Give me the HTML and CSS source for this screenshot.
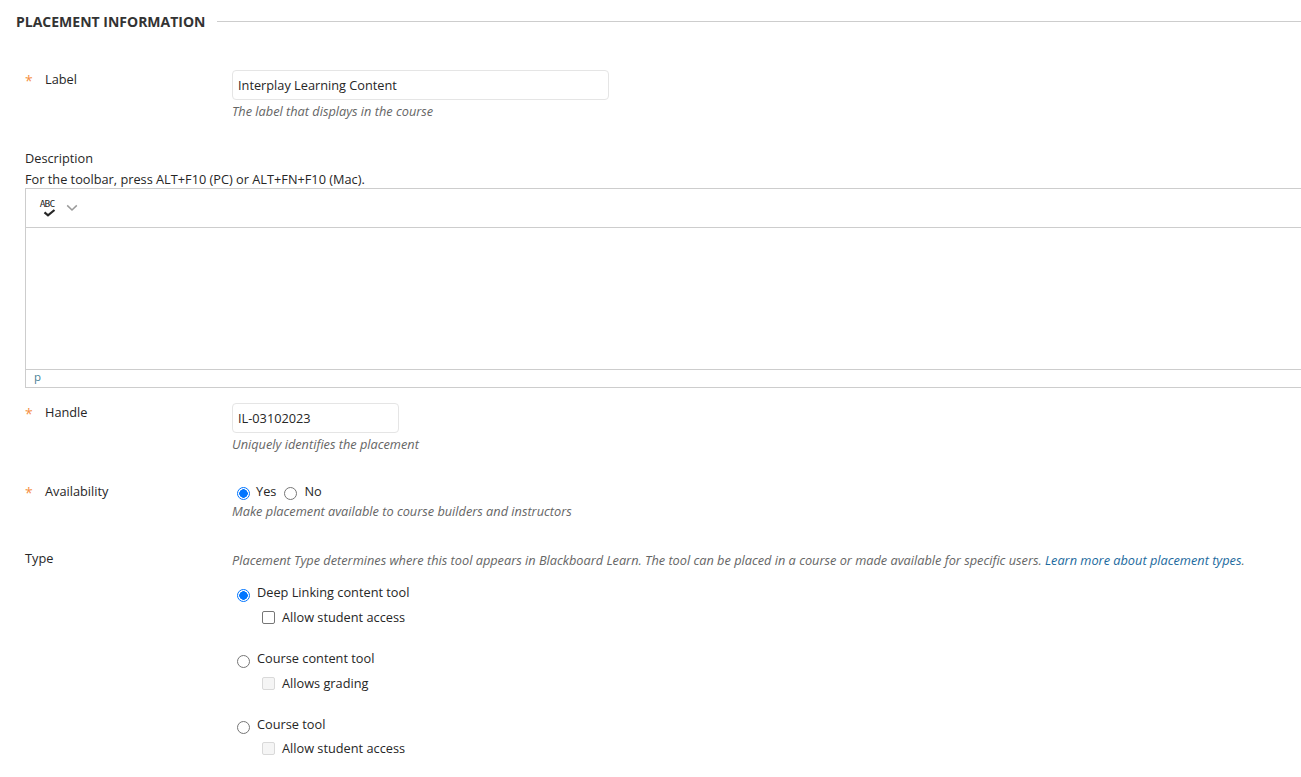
FILE: index.html
```html
<!DOCTYPE html>
<html lang="en">
<head>
<meta charset="utf-8">
<title>Placement Information</title>
<link rel="stylesheet" href="styles.css">
</head>
<body>
<form class="page">
  <div class="section-head">
    <h2 class="section-title">Placement Information</h2>
    <div class="section-rule"></div>
  </div>

  <div class="row row-label">
    <div class="row-name"><span class="req">*</span><label>Label</label></div>
    <div class="row-field">
      <div class="input input-wide">Interplay Learning Content</div>
      <div class="hint">The label that displays in the course</div>
    </div>
  </div>

  <div class="desc">
    <div class="desc-title">Description</div>
    <div class="desc-help">For the toolbar, press ALT+F10 (PC) or ALT+FN+F10 (Mac).</div>
    <div class="editor">
      <div class="editor-bar">
        <span class="spell"><span class="spell-text">ABC</span>
          <svg class="spell-check" width="13" height="8" viewBox="0 0 13 8"><path d="M1.5 3.4 5 6.4 11.5 1" fill="none" stroke="#262626" stroke-width="2.2"/></svg>
        </span>
        <svg class="chev" width="12" height="8" viewBox="0 0 12 8"><path d="M1.2 1.4 6 6 10.8 1.4" fill="none" stroke="#9a9a9a" stroke-width="1.5"/></svg>
      </div>
      <div class="editor-body"></div>
      <div class="editor-foot">p</div>
    </div>
  </div>

  <div class="row row-handle">
    <div class="row-name"><span class="req">*</span><label>Handle</label></div>
    <div class="row-field">
      <div class="input input-short">IL-03102023</div>
      <div class="hint">Uniquely identifies the placement</div>
    </div>
  </div>

  <div class="row row-avail">
    <div class="row-name"><span class="req">*</span><label>Availability</label></div>
    <div class="row-field">
      <div class="radios">
        <span class="radio on"></span><span class="opt">Yes</span>
        <span class="radio"></span><span class="opt">No</span>
      </div>
      <div class="hint">Make placement available to course builders and instructors</div>
    </div>
  </div>

  <div class="row row-type">
    <div class="row-name type-name"><label>Type</label></div>
    <div class="row-field">
      <div class="hint type-hint">Placement Type determines where this tool appears in Blackboard Learn. The tool can be placed in a course or made available for specific users. <a class="link" href="#">Learn more about placement types</a>.</div>
      <div class="type-opt">
        <div class="radio-line"><span class="radio on"></span><span class="opt">Deep Linking content tool</span></div>
        <div class="check-line"><span class="check"></span><span class="opt">Allow student access</span></div>
      </div>
      <div class="type-opt">
        <div class="radio-line"><span class="radio"></span><span class="opt">Course content tool</span></div>
        <div class="check-line"><span class="check off"></span><span class="opt">Allows grading</span></div>
      </div>
      <div class="type-opt">
        <div class="radio-line"><span class="radio"></span><span class="opt">Course tool</span></div>
        <div class="check-line"><span class="check off"></span><span class="opt">Allow student access</span></div>
      </div>
    </div>
  </div>
</form>
</body>
</html>
```
FILE: styles.css
```css
* { box-sizing: border-box; }
html, body { margin: 0; height: 777px; overflow: hidden; background: #fff; }
body { font-family: "Open Sans", "Liberation Sans", sans-serif; font-size: 12.75px; line-height: 18px; color: #262626; }
.page { padding-top: 11px; }
.section-head { display: flex; align-items: center; padding-left: 16px; height: 20px; }
.section-title { margin: 2px 0 0; font-size: 14px; font-weight: 700; line-height: 20px; text-transform: uppercase; color: #333; }
.section-rule { flex: 1; margin-left: 11px; height: 1px; background: #cdcdcd; }
.row { display: flex; }
.row-name { width: 232px; padding-left: 25px; display: flex; flex: none; }
.req { width: 20px; padding-top: 2px; font-size: 14px; color: #f58f45; }
.row-field { flex: 1; min-width: 0; }
.row-label { margin-top: 39px; }
.input { height: 30px; border: 1px solid #e5e5e5; border-radius: 4px; padding: 5px 5px; color: #262626; }
.input-wide { width: 377px; }
.input-short { width: 167px; }
.hint { margin-top: 2px; font-style: italic; color: #666; line-height: 18px; }
.desc { margin-top: 29px; padding-left: 25px; }
.desc-title { line-height: 18px; }
.desc-help { margin-top: 3px; line-height: 18px; }
.editor { border: 1px solid #cdcdcd; border-right: 0; height: 200px; display: flex; flex-direction: column; }
.editor-bar { height: 39px; border-bottom: 1px solid #cdcdcd; display: flex; align-items: center; padding-left: 14px; flex: none; }
.spell { display: flex; flex-direction: column; align-items: center; width: 16px; margin-top: -1px; }
.spell-text { font-family: "DejaVu Sans Mono", monospace; font-size: 9.5px; line-height: 9px; letter-spacing: -.9px; color: #262626; margin-left: -2px; }
.spell-check { display: block; margin: 1px 0 0 2px; }
.chev { margin-left: 10px; }
.editor-body { flex: 1; }
.editor-foot { height: 18px; border-top: 1px solid #cdcdcd; padding-left: 8px; font-size: 11.5px; line-height: 14px; color: #4a8296; flex: none; }
.row-handle { margin-top: 15px; }
.row-avail { margin-top: 29px; }
.radios { display: flex; align-items: center; height: 18px; padding-left: 5px; }
.radio { width: 13px; height: 13px; border-radius: 50%; border: 1px solid #767676; flex: none; background: #fff; margin-top: 6px; }
.radios .radio { margin-top: 4px; }
.radio.on { border: 1.5px solid #0075ff; background: radial-gradient(circle, #0075ff 0 4px, #fff 4.5px); }
.opt { margin-left: 7px; margin-right: 8px; }
.radios .opt { margin-left: 6px; }
.radios .opt:last-child { margin-left: 7px; }
.row-type { margin-top: 29px; }
.type-hint { margin-top: 2px; }
.type-opt { margin-bottom: 23px; }
.radio-line { display: flex; align-items: center; margin-top: 14px; padding-left: 5px; height: 18px; }
.check-line { display: flex; align-items: center; margin-top: 7px; padding-left: 30px; height: 18px; }
.type-opt:last-child .check-line { margin-top: 6px; }
.check { width: 13px; height: 13px; border: 1px solid #767676; border-radius: 2px; background: #fff; flex: none; margin-top: 1px; }
.check.off { border-color: #d9d9d9; background: #f5f5f5; }
.link { color: #1c6a9e; text-decoration: none; }
```
